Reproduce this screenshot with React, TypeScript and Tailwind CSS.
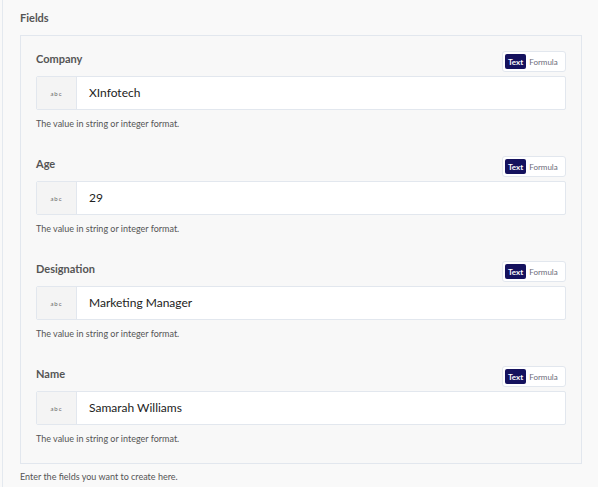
import React from 'react';

interface FieldProps {
  label: string;
  value: string;
}

const fields: FieldProps[] = [
  { label: 'Company', value: 'XInfotech' },
  { label: 'Age', value: '29' },
  { label: 'Designation', value: 'Marketing Manager' },
  { label: 'Name', value: 'Samarah Williams' },
];

const ModeToggle: React.FC = () => (
  <div className="flex h-[21px] w-[64px] items-center gap-[3px] rounded-[3px] border border-[#e2e7ee] bg-white px-[2px]">
    <span className="flex h-[15px] items-center rounded-[2px] bg-[#15125e] px-[3px] text-[8px] font-bold text-white">
      Text
    </span>
    <span className="text-[8px] text-[#6b6b78]">Formula</span>
  </div>
);

const FieldRow: React.FC<FieldProps> = ({ label, value }) => (
  <div className="flex flex-col">
    <div className="flex h-[21px] items-start justify-between">
      <span className="mt-[1px] text-[11px] font-bold leading-[14px] text-[#555555]">{label}</span>
      <ModeToggle />
    </div>
    <div className="mt-[4px] flex h-[34px] overflow-hidden rounded-[2px] border border-[#e2e7ee] bg-white">
      <div className="flex w-[40px] shrink-0 items-center justify-center border-r border-[#e2e7ee] bg-[#f4f4f4] text-[6px] tracking-[1px] text-[#666]">
        abc
      </div>
      <div className="flex items-center pl-[12px] text-[12px] text-[#222]">{value}</div>
    </div>
    <p className="mt-[8px] text-[9px] leading-[12px] text-[#555]">The value in string or integer format.</p>
  </div>
);

export default function App() {
  return (
    <div className="h-[487px] w-[598px] bg-[#f9f9f9] pl-[2px] font-['Lato','Noto_Sans',sans-serif]">
      <div className="h-full border-l border-[#e4e9ef] pl-[17px] pr-[16px]">
        <div className="pt-[11px] text-[11px] font-bold leading-[14px] text-[#555]">Fields</div>
        <div className="mt-[10px] flex flex-col gap-[26px] border border-[#e2e7ee] bg-[#f8f8f8] px-[15px] pb-[18px] pt-[15px]">
          {fields.map((f) => (
            <FieldRow key={f.label} {...f} />
          ))}
        </div>
        <p className="mt-[7px] text-[9px] leading-[12px] text-[#555]">Enter the fields you want to create here.</p>
      </div>
    </div>
  );
}
